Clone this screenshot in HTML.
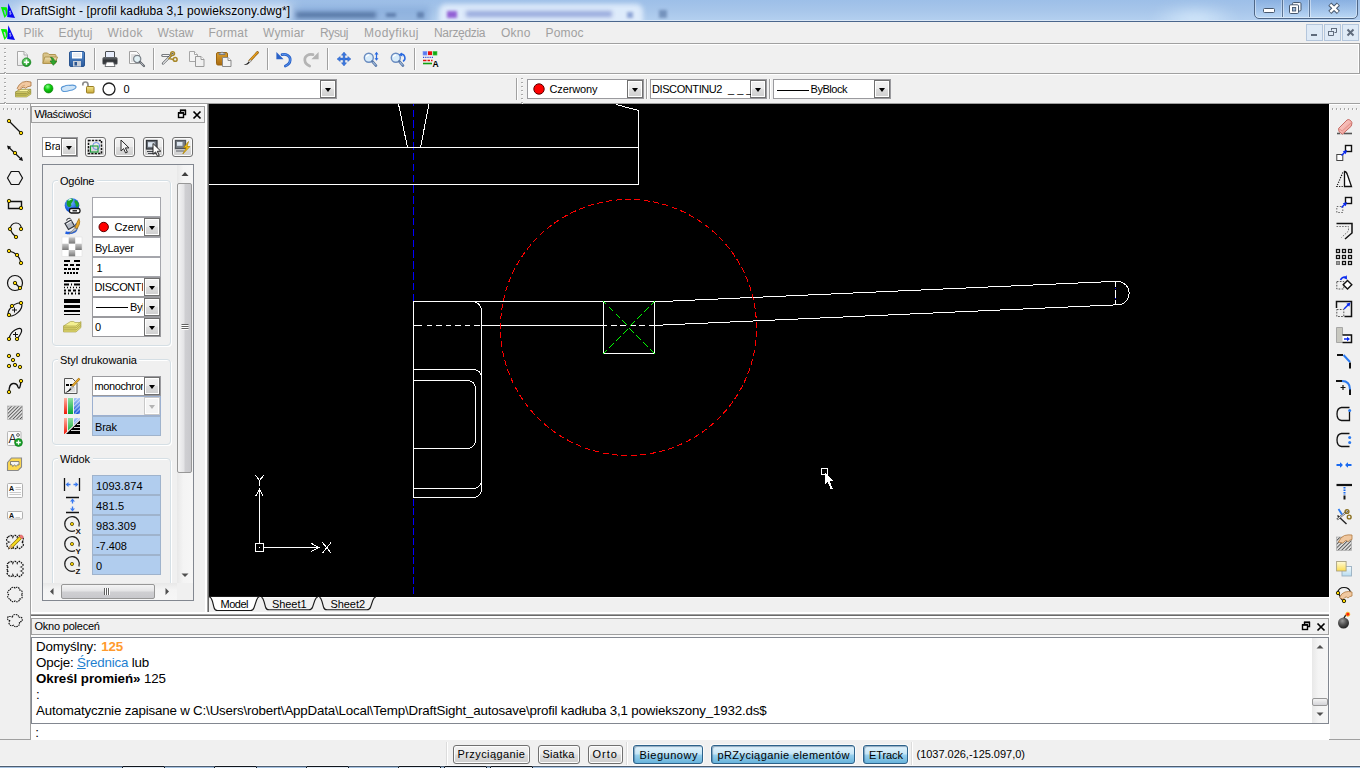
<!DOCTYPE html>
<html lang="pl"><head><meta charset="utf-8"><title>DraftSight</title>
<style>
html,body{margin:0;padding:0}
body{position:relative;width:1360px;height:768px;overflow:hidden;background:#f0f0f0;font-family:"Liberation Sans",sans-serif;font-size:11px;color:#000}
.a,.t,svg.i{position:absolute}
.t{white-space:pre;line-height:1}
.hl{position:absolute;height:1px;left:0;width:1360px}
.vl{position:absolute;width:1px}
svg{display:block;overflow:visible}
/* title */
#title{left:0;top:0;width:1360px;height:21px;overflow:hidden;background:linear-gradient(to bottom,#9dbfe8 0,#a6c5ea 45%,#b4d0f0 100%)}
#title .glow{position:absolute;filter:blur(6px)}
#capbtn{left:1254px;top:-2px;width:102px;height:19px;border:1px solid #4f6787;border-radius:0 0 5px 5px;background:linear-gradient(to bottom,rgba(110,155,215,.45) 0,rgba(150,190,235,.3) 55%,rgba(200,228,252,.45) 100%);box-shadow:inset 0 0 0 1px rgba(255,255,255,.4)}
/* combos */
.cb{position:absolute;box-sizing:border-box;border:1px solid #9a9a9e;background:#fff;height:20px;overflow:hidden}
.cb .bt{position:absolute;right:0;top:0;bottom:0;width:16px;border:1px solid #707070;box-sizing:border-box;background:linear-gradient(to bottom,#f2f2f2 0,#ebebeb 48%,#dddddd 52%,#cfcfcf 100%);box-shadow:inset 0 0 0 1px #fff}
.cb .bt:after{content:"";position:absolute;left:4px;top:7px;border:3.5px solid transparent;border-top:4px solid #000;border-bottom:0}
.fd{position:absolute;box-sizing:border-box;border:1px solid #a5a6ac;background:#fff;overflow:hidden}
.fb{background:#b1cdee;border-color:#9fb3cc}
.gb{position:absolute;box-sizing:border-box;border:1px solid #d5dfe5;border-radius:4px;box-shadow:inset 1px 1px 0 #fff,1px 1px 0 #fff}
.gl{position:absolute;background:#f0f0f0;height:12px}
.pb{position:absolute;box-sizing:border-box;width:21px;height:20px;border:1px solid #707070;border-radius:3px;background:linear-gradient(to bottom,#f2f2f2 0,#ebebeb 48%,#dddddd 52%,#cfcfcf 100%);box-shadow:inset 0 0 0 1px #fcfcfc}
.sb{position:absolute;box-sizing:border-box;height:19px;border:1px solid #707070;border-radius:3px;background:linear-gradient(to bottom,#f2f2f2 0,#ebebeb 48%,#dddddd 52%,#cfcfcf 100%);box-shadow:inset 0 0 0 1px #fcfcfc}
.sb.on{border-color:#2c628b;background:linear-gradient(to bottom,#e5f4fc 0,#c4e5f6 48%,#98d1ef 52%,#68b3db 100%);box-shadow:inset 1px 1px 1px rgba(40,80,120,.45),0 0 0 1px rgba(255,255,255,.7)}
.sep{position:absolute;width:1px;background:#a0a0a0;box-shadow:1px 0 0 #fff}
.grip{position:absolute;width:2px;background:repeating-linear-gradient(to bottom,#a8a8a8 0,#a8a8a8 1px,transparent 1px,transparent 4px)}
.grip:after{content:'';position:absolute;left:1px;top:1px;width:1px;height:100%;background:repeating-linear-gradient(to bottom,#fff 0,#fff 1px,transparent 1px,transparent 4px)}
.gripb{position:absolute;height:2px;background:repeating-linear-gradient(to right,#a8a8a8 0,#a8a8a8 1px,transparent 1px,transparent 4px)}
.gripb:after{content:'';position:absolute;left:1px;top:1px;height:1px;width:100%;background:repeating-linear-gradient(to right,#fff 0,#fff 1px,transparent 1px,transparent 4px)}
.mdi{position:absolute;box-sizing:border-box;width:17px;height:17px;top:24px;border:1px solid #b4c6dc;background:#dfeaf6}

.cb .bt.dis{background:#f4f4f4;border-color:#c8c8c8}
.cb .bt.dis:after{border-top-color:#b4b4b4}

</style></head>
<body>
<div id="title" class="a"><div class="glow" style="left:-5px;top:-6px;width:120px;height:40px;background:radial-gradient(ellipse at 40% 55%,rgba(255,255,255,.5),rgba(255,255,255,0) 70%)"></div><div class="glow" style="left:20px;top:3px;width:275px;height:16px;background:rgba(255,255,255,.45);filter:blur(6px);border-radius:8px"></div><div class="glow" style="left:290px;top:6px;width:140px;height:20px;background:rgba(80,125,190,.28);filter:blur(3px);border-radius:0px"></div><div class="glow" style="left:296px;top:12px;width:80px;height:6px;background:rgba(30,60,110,.5);filter:blur(2px);border-radius:0px"></div><div class="glow" style="left:386px;top:13px;width:10px;height:4px;background:rgba(30,60,110,.45);filter:blur(1.5px);border-radius:0px"></div><div class="glow" style="left:417px;top:12px;width:7px;height:6px;background:rgba(30,60,110,.4);filter:blur(1.5px);border-radius:0px"></div><div class="glow" style="left:439px;top:4px;width:204px;height:24px;background:rgba(226,238,252,.92);filter:blur(2.5px);border-radius:7px"></div><div class="glow" style="left:447px;top:11px;width:10px;height:7px;background:rgba(120,50,200,.75);filter:blur(1.8px);border-radius:0px"></div><div class="glow" style="left:466px;top:11px;width:146px;height:6px;background:rgba(105,125,200,.6);filter:blur(2px);border-radius:0px"></div><div class="glow" style="left:627px;top:12px;width:6px;height:6px;background:rgba(90,120,190,.6);filter:blur(1.5px);border-radius:0px"></div><div class="glow" style="left:659px;top:10px;width:8px;height:8px;background:rgba(50,80,130,.45);filter:blur(1.8px);border-radius:0px"></div><div class="glow" style="left:1150px;top:4px;width:90px;height:30px;background:radial-gradient(ellipse,rgba(225,242,255,.8),rgba(255,255,255,0) 70%)"></div></div><div class="hl" style="top:20px;background:#dae7f6"></div><div class="hl" style="top:21px;background:#4a668c"></div><svg class="i" style="left:0;top:0" width="16" height="20"><path d="M0.900 7.100L6.700 7.300Q8.200 10.600 7.400 14.600L4.500 18.100Z" fill="#00f000"/><path d="M3.500 9.700L5 10Q6.400 12.400 5.900 14.500L5.100 15.600Z" fill="#88b4dc"/><path d="M8.300 3.200L15 17.900 7.200 17Z" fill="#0808f0"/><path d="M10.800 11.400c-.9-.4-1.500 0-1.200.7c.3.600 1.300.6 1.500 1.300c.1.700-.8.900-1.600.5" fill="none" stroke="#e8e8ff" stroke-width=".9"/></svg><svg class="i" style="left:0;top:22px" width="16" height="20"><path d="M0.900 7.100L6.700 7.300Q8.200 10.600 7.400 14.600L4.500 18.100Z" fill="#00f000"/><path d="M3.500 9.700L5 10Q6.400 12.400 5.900 14.500L5.100 15.600Z" fill="#c8d0d8"/><path d="M8.300 3.200L15 17.900 7.200 17Z" fill="#0808f0"/><path d="M10.800 11.400c-.9-.4-1.500 0-1.200.7c.3.600 1.300.6 1.500 1.300c.1.700-.8.900-1.600.5" fill="none" stroke="#e8e8ff" stroke-width=".9"/></svg><span class="t" style="left:21.0px;top:4.84px;font-size:12px;letter-spacing:0.12px;text-shadow:0 0 5px rgba(255,255,255,.9)">DraftSight - [profil kadłuba 3,1 powiekszony.dwg*]</span><div id="capbtn" class="a"></div><div class="vl" style="left:1282px;top:0;height:17px;background:#5c7595;box-shadow:1px 0 0 rgba(255,255,255,.45),-1px 0 0 rgba(255,255,255,.3)"></div><div class="vl" style="left:1309px;top:0;height:17px;background:#5c7595;box-shadow:1px 0 0 rgba(255,255,255,.45),-1px 0 0 rgba(255,255,255,.3)"></div><svg class="i" style="left:1254px;top:0" width="104" height="18"><rect x="9.500" y="8.500" width="11" height="4" rx="1" fill="#fff" stroke="#47586e" stroke-width="1"/><rect x="38.500" y="2.500" width="8.500" height="8.500" rx="1.200" fill="#f4f6fa" stroke="#47586e"/><rect x="35.500" y="4.800" width="9" height="8.700" rx="1.200" fill="#fff" stroke="#47586e"/><rect x="38.500" y="7.500" width="3.200" height="3.500" fill="#9ab6d8" stroke="#47586e" stroke-width=".9"/><path d="M75.800 4.200l8.600 8.200M84.400 4.200l-8.600 8.200" stroke="#47586e" stroke-width="4.400"/><path d="M76.300 4.700l7.600 7.200M83.900 4.700l-7.600 7.200" stroke="#fff" stroke-width="2.400"/></svg><span class="t" style="left:23.5px;top:26.84px;font-size:12px;color:#a0a0a0;letter-spacing:0.22px;">Plik</span><span class="t" style="left:58.5px;top:26.84px;font-size:12px;color:#a0a0a0;letter-spacing:0.13px;">Edytuj</span><span class="t" style="left:107.5px;top:26.84px;font-size:12px;color:#a0a0a0;letter-spacing:0.41px;">Widok</span><span class="t" style="left:157.5px;top:26.84px;font-size:12px;color:#a0a0a0;">Wstaw</span><span class="t" style="left:208.5px;top:26.84px;font-size:12px;color:#a0a0a0;letter-spacing:0.20px;">Format</span><span class="t" style="left:263.0px;top:26.84px;font-size:12px;color:#a0a0a0;letter-spacing:0.19px;">Wymiar</span><span class="t" style="left:320.0px;top:26.84px;font-size:12px;color:#a0a0a0;letter-spacing:-0.38px;">Rysuj</span><span class="t" style="left:364.0px;top:26.84px;font-size:12px;color:#a0a0a0;letter-spacing:0.48px;">Modyfikuj</span><span class="t" style="left:434.0px;top:26.84px;font-size:12px;color:#a0a0a0;letter-spacing:-0.32px;">Narzędzia</span><span class="t" style="left:501.0px;top:26.84px;font-size:12px;color:#a0a0a0;letter-spacing:0.27px;">Okno</span><span class="t" style="left:545.5px;top:26.84px;font-size:12px;color:#a0a0a0;letter-spacing:0.16px;">Pomoc</span><div class="mdi" style="left:1306px"></div><div class="mdi" style="left:1324px"></div><div class="mdi" style="left:1342px"></div><svg class="i" style="left:1306px;top:24px" width="54" height="17"><rect x="5" y="10" width="6" height="2" fill="#5f6b7c"/><path d="M25.500 6.500v-2h5v4h-2M22.500 7.500h5v4h-5z" fill="none" stroke="#5f6b7c"/><path d="M22 7.500h6M25 4.500h6" stroke="#5f6b7c"/><path d="M41.500 5.500l6 6M47.500 5.500l-6 6" stroke="#5f6b7c" stroke-width="2"/></svg><div class="hl" style="top:43px;background:#a0a0a0"></div><div class="hl" style="top:44px;background:#fff"></div><div class="vl" style="left:1359px;top:43px;height:31px;background:#a0a0a0"></div><div class="vl" style="left:1358px;top:44px;height:29px;background:#fff"></div><div class="hl" style="top:73px;background:#a0a0a0"></div><div class="hl" style="top:74px;background:#fff"></div><div class="hl" style="top:103px;background:#a0a0a0"></div><div class="grip" style="left:4px;top:48px;height:25px"></div><div class="sep" style="left:94px;top:48px;height:22px"></div><div class="sep" style="left:153px;top:48px;height:22px"></div><div class="sep" style="left:267px;top:48px;height:22px"></div><div class="sep" style="left:327px;top:48px;height:22px"></div><div class="sep" style="left:414px;top:48px;height:22px"></div><svg class="i" style="left:0;top:0" width="460" height="104"><g transform="translate(16,51)"><defs><linearGradient id="pg" x1="0" y1="0" x2="1" y2="1"><stop offset="0" stop-color="#fff"/><stop offset="1" stop-color="#dcdcdc"/></linearGradient><radialGradient id="gb" cx=".4" cy=".35" r=".7"><stop offset="0" stop-color="#7be07b"/><stop offset="1" stop-color="#0f8a1a"/></radialGradient></defs><path d="M1.500 .5h6.500l3.500 3.500v10.500h-10z" fill="url(#pg)" stroke="#a8a8a8"/><path d="M8 .5v3.500h3.500" fill="#f4f4f4" stroke="#a8a8a8"/><circle cx="10.500" cy="11.200" r="4.300" fill="url(#gb)" stroke="#1c8a26" stroke-width=".8"/><path d="M10.500 8.600v5.200M7.900 11.200h5.200" stroke="#fff" stroke-width="1.500"/></g><g transform="translate(42,51)"><defs><linearGradient id="fo" x1="0" y1="0" x2="0" y2="1"><stop offset="0" stop-color="#efe2b8"/><stop offset="1" stop-color="#c9a95a"/></linearGradient></defs><path d="M1 3.500q0-1.500 1.500-1.500h3l1.500 1.500h6q1 0 1 1v7.500h-13z" fill="#d9c48a" stroke="#b09550"/><path d="M.8 12.500l2-6.500h12.700l-2.500 6.500z" fill="url(#fo)" stroke="#b09550"/><path d="M8.500 6.200c2.600.2 3.800 1.800 3.900 3.800h2.400l-3.400 4.300-3.400-4.300h2.200c-.1-1.500-.7-2.600-1.700-3.800z" fill="#2ea62e" stroke="#1d7a1d" stroke-width=".7"/></g><g transform="translate(69,51)"><defs><linearGradient id="sv" x1="0" y1="0" x2="0" y2="1"><stop offset="0" stop-color="#5a8fd0"/><stop offset="1" stop-color="#2a5a9c"/></linearGradient></defs><rect x=".5" y=".5" width="15" height="15" rx="1.500" fill="url(#sv)" stroke="#2a5590"/><rect x="3" y="1" width="10" height="6.500" fill="#fff"/><path d="M4 3h8M4 5h8" stroke="#d4dce8"/><rect x="4" y="10" width="8" height="5.500" fill="#c9cfd8"/><rect x="5.500" y="11" width="2.500" height="3.500" fill="#2a5590"/></g><g transform="translate(102,51)"><defs><linearGradient id="pr" x1="0" y1="0" x2="0" y2="1"><stop offset="0" stop-color="#6a6e72"/><stop offset=".5" stop-color="#2e3134"/><stop offset="1" stop-color="#45484c"/></linearGradient></defs><path d="M3.500 6v-5q0-.5.500-.5h8q.5 0 .5.500v5" fill="#e8eefc" stroke="#4a4d50"/><path d="M.5 12.500v-5q0-1.500 1.500-1.500h12q1.500 0 1.500 1.500v5q0 1-1 1h-13q-1 0-1-1z" fill="url(#pr)"/><path d="M3 15.500l1.500-4.500h7l1.500 4.500z" fill="#fff" stroke="#55585c" stroke-width=".8"/></g><g transform="translate(129,51)"><path d="M.5 .5h7l3 3v9h-10z" fill="#fafafa" stroke="#a0a0a0"/><path d="M2 4h5M2 6h4M2 8h3M2 10h3" stroke="#c8c8c8"/><circle cx="8.200" cy="8" r="3.600" fill="#dff0f4" fill-opacity=".9" stroke="#7a8088" stroke-width="1.200"/><path d="M10.800 10.800l4.200 4.200" stroke="#60656c" stroke-width="2.200" stroke-linecap="round"/><path d="M11.500 11.500l3 3" stroke="#c8ccd0" stroke-width=".8"/></g><g transform="translate(162,51)"><path d="M.5 4.500h6.500M1 12.500l9.500-9.500" stroke="#50545a" stroke-width="2.400" stroke-linecap="round"/><path d="M.8 4.500h6M1.200 12.300l9-9" stroke="#f4f4f4" stroke-width="1.100" stroke-linecap="round"/><circle cx="10.600" cy="2.700" r="1.900" fill="none" stroke="#a8882a" stroke-width="1.500"/><circle cx="13.200" cy="8.400" r="1.900" fill="none" stroke="#a8882a" stroke-width="1.500"/><path d="M9.500 4.500l-2.500 3 4.200 1" fill="none" stroke="#a8882a" stroke-width="1.300"/></g><g transform="translate(189,51)"><path d="M.5 .5h5l3 3v7h-8z" fill="#f4f4f4" stroke="#a6a6a6"/><path d="M5.500 .5v3h3" fill="#fff" stroke="#a6a6a6"/><path d="M6.500 5.500h5.500l3 3v7h-8.500z" fill="#f0f0f0" stroke="#9a9a9a"/><path d="M12 5.500v3h3" fill="#fff" stroke="#9a9a9a"/></g><g transform="translate(216,51)"><defs><linearGradient id="pa" x1="0" y1="0" x2="0" y2="1"><stop offset="0" stop-color="#dca030"/><stop offset="1" stop-color="#a86a10"/></linearGradient></defs><rect x=".5" y="1.500" width="11" height="12.500" rx="1.500" fill="url(#pa)" stroke="#9a6410"/><path d="M3 3.500v-1.500h1.500q1.500-2 3 0h1.500v1.500z" fill="#c8ccd2" stroke="#6a6e74" stroke-width=".8"/><path d="M6.500 6.500h5.500l3 3v6h-8.500z" fill="#f2f2f2" stroke="#8a8a8a"/><path d="M12 6.500v3h3" fill="#fff" stroke="#8a8a8a"/></g><g transform="translate(243,51)"><path d="M14.500 1.500l-7.800 8.300" stroke="#8a5a10" stroke-width="2.600" stroke-linecap="round"/><path d="M14.300 1.500l-7.500 8" stroke="#e8a020" stroke-width="1.400" stroke-linecap="round"/><path d="M7.500 8.700l-2 2.100 1 1 2-2.100z" fill="#d8dce0" stroke="#7a7e84" stroke-width=".6"/><path d="M5.700 10.700q-1.200 2-5 3.300q3.500.6 6-2.300z" fill="#1a1a1a"/></g><g transform="translate(276,51)"><path d="M6 3.600C10 2.400 14.600 5 14.200 9.200C14 12 12 14 9.300 15" fill="none" stroke="#2a62c8" stroke-width="2.700" stroke-linecap="round"/><path d="M6 3.600C10 2.400 14.600 5 14.200 9.200C14 12 12 14 9.300 15" fill="none" stroke="#5a96f0" stroke-width="1"/><path d="M.4 1v7.200h7.200z" fill="#2a62c8"/></g><g transform="translate(303,51)"><g transform="translate(16,0) scale(-1,1)"><path d="M6 3.600C10 2.400 14.600 5 14.200 9.200C14 12 12 14 9.300 15" fill="none" stroke="#b4b4b4" stroke-width="2.700" stroke-linecap="round"/><path d="M.4 1v7.200h7.200z" fill="#b4b4b4"/></g></g><g transform="translate(336,51)"><path d="M8 1l2.600 3.200h-1.700v2.900h2.900v-1.700l3.200 2.600-3.200 2.600v-1.700h-2.900v2.900h1.700l-2.600 3.200-2.600-3.200h1.700v-2.900h-2.900v1.700l-3.200-2.600 3.200-2.600v1.700h2.900v-2.900h-1.700z" fill="#3a78e0" stroke="#2456b8" stroke-width=".4"/></g><g transform="translate(363,51)"><circle cx="5.800" cy="6.800" r="4.500" fill="#d8ecfa" stroke="#6a8cc0" stroke-width="1.400"/><path d="M3.200 6q.8-2 3-2.200" fill="none" stroke="#fff" stroke-width="1.200"/><path d="M9.300 10.400l3.700 4.200" stroke="#5878a8" stroke-width="2.600" stroke-linecap="round"/><path d="M9.800 11l3 3.400" stroke="#b8d0ec" stroke-width="1"/><path d="M13.500 .8l2 2.600h-4zM13.500 9.800l2-2.600h-4z" fill="#2a6ae0"/><path d="M13.500 3v5" stroke="#2a6ae0" stroke-width="1.200"/></g><g transform="translate(390,51)"><circle cx="5.800" cy="6.800" r="4.500" fill="#d8ecfa" stroke="#6a8cc0" stroke-width="1.400"/><path d="M3.200 6q.8-2 3-2.200" fill="none" stroke="#fff" stroke-width="1.200"/><path d="M9.300 10.400l3.700 4.200" stroke="#5878a8" stroke-width="2.600" stroke-linecap="round"/><path d="M9.800 11l3 3.400" stroke="#b8d0ec" stroke-width="1"/><path d="M10.500 3A4 4 0 0 1 13 10.400" fill="none" stroke="#2a6ae0" stroke-width="1.500"/><path d="M8.600 4l3.400-2.600.4 4z" fill="#2a6ae0"/></g><g transform="translate(423,51)"><rect x="0" y=".3" width="4" height="3.800" fill="#5a7af0" stroke="#8aa0f8" stroke-width=".6"/><rect x="5" y=".3" width="4" height="3.800" fill="#e81010"/><rect x="10" y=".3" width="4" height="3.800" fill="#10a810" stroke="#50c850" stroke-width=".6"/><path d="M0 6.400h10" stroke="#2a4ae0" stroke-width="1.400" stroke-dasharray="1.200 1"/><path d="M0 9.500h9.500" stroke="#e01010" stroke-width="1.600" stroke-dasharray="3.500 1 2.500 1 2"/><path d="M0 12.500h9" stroke="#10a010" stroke-width="1.600"/></g><text x="432.500" y="67.300" font-family="Liberation Sans,sans-serif" font-size="8.500" font-weight="700" fill="#000">A</text><g transform="translate(15,81)"><path d="M.5 11L5 8.300H15.800L11.500 11Z" fill="#f8f4a0" stroke="#8a8430" stroke-width=".7"/><path d="M.5 11.0H11.500L15.800 8.3V9.95L11.500 12.65H.5Z" fill="#e8e078" stroke="#8a8430" stroke-width=".6"/><path d="M.5 12.65H11.500L15.800 9.95V11.6L11.500 14.3H.5Z" fill="#d2ca5c" stroke="#8a8430" stroke-width=".6"/><path d="M.5 14.3H11.500L15.800 11.600000000000001V13.25L11.500 15.950000000000001H.5Z" fill="#e0d86c" stroke="#8a8430" stroke-width=".6"/><path d="M2.200 7.300Q3.500 3.500 7.500 1.200Q11.500-.3 16 1V5Q12.500 5.200 10.500 7.200Q9 5.600 7 6.600L4.800 9Q3 9 2.200 7.300Z" fill="#f2c9a0" stroke="#a8703a" stroke-width=".8"/><path d="M5.500 6.500q2-2 4.500-2.300" fill="none" stroke="#c89868" stroke-width=".7"/></g></svg><div class="grip" style="left:4px;top:78px;height:25px"></div><div class="cb" style="left:37px;top:79px;width:300px"><div class="bt"></div></div><svg class="i" style="left:37px;top:79px" width="100" height="20"><defs><radialGradient id="gd" cx=".4" cy=".3" r=".75"><stop offset="0" stop-color="#8cff8c"/><stop offset=".45" stop-color="#10d010"/><stop offset="1" stop-color="#048a04"/></radialGradient><linearGradient id="lk" x1="0" y1="0" x2="0" y2="1"><stop offset="0" stop-color="#f4e890"/><stop offset="1" stop-color="#c8a838"/></linearGradient></defs><circle cx="11.500" cy="9.500" r="4.500" fill="url(#gd)" stroke="#0a8a0a" stroke-width=".6"/><path d="M24.600 10.800q-1.200-2.600 2.200-3.400q3-1.600 6.200-1q3.200-.6 5.200 .3q2 1.300-.6 3.200q-2 1.500-5 1.600q-3.600 1.500-6.200 .9q-1.400-.4-1.800-1.600z" fill="#cfe5f8" stroke="#5a98d6" stroke-width="1.100"/><path d="M45.800 6.500v-1q0-2.500 2.600-2.500t2.600 2.500v2.500" fill="none" stroke="#8c8c8c" stroke-width="1.700"/><rect x="49.500" y="7.500" width="7.500" height="6.500" rx=".8" fill="url(#lk)" stroke="#9a7e24"/><circle cx="72" cy="10" r="6" fill="#fff" stroke="#202020" stroke-width="1.300"/></svg><span class="t" style="left:123.5px;top:83.69px;font-size:11px;">0</span><div class="sep" style="left:516px;top:78px;height:22px"></div><div class="grip" style="left:521px;top:78px;height:25px"></div><div class="cb" style="left:527px;top:79px;width:117px"><div class="bt"></div></div><svg class="i" style="left:527px;top:79px" width="30" height="20"><circle cx="12" cy="10" r="5.200" fill="#ff0000" stroke="#5a0000" stroke-width="1"/></svg><span class="t" style="left:549.5px;top:83.69px;font-size:11px;letter-spacing:-0.13px;">Czerwony</span><div class="sep" style="left:646px;top:79px;height:20px"></div><div class="cb" style="left:650px;top:79px;width:117px"><div class="bt"></div></div><span class="t" style="left:652.0px;top:83.69px;font-size:11px;letter-spacing:-0.41px;">DISCONTINU2</span><div class="a" style="left:651px;top:80px;width:99.5px;height:18px;overflow:hidden"><span class="t" style="left:77.0px;top:3.69px;font-size:11px;">_ _ _ _ _</span></div><div class="sep" style="left:769px;top:79px;height:20px"></div><div class="cb" style="left:773px;top:79px;width:118px"><div class="bt"></div></div><div class="a" style="left:777px;top:90px;width:32px;height:1px;background:#000"></div><span class="t" style="left:810.5px;top:83.69px;font-size:11px;letter-spacing:-0.46px;">ByBlock</span><div class="hl" style="top:104px;width:30px;background:#fff"></div><div class="vl" style="left:30px;top:104px;height:636px;background:#a0a0a0"></div><div class="hl" style="top:739px;width:31px;background:#a0a0a0"></div><div class="gripb" style="left:3px;top:108px;width:25px"></div><svg class="i" style="left:0;top:0" width="31" height="740" fill="none" stroke="#111" stroke-width="1.200"><path d="M9 121l12 12"/><circle cx="9" cy="121" r="1.700" fill="#ffd800" stroke="#1a1a00" stroke-width=".9"/><circle cx="21" cy="133" r="1.700" fill="#ffd800" stroke="#1a1a00" stroke-width=".9"/><path d="M8.500 147l13 12.500"/><path d="M7 145.500l4.200 1.200-3 3zM23 161l-4.200-1.200 3-3z" fill="#111" stroke="none"/><circle cx="15" cy="153" r="1.700" fill="#ffd800" stroke="#1a1a00" stroke-width=".9"/><path d="M7.500 178l3.700-6.500h7.600l3.700 6.500-3.700 6.500h-7.600z"/><path d="M8.500 201.500h13v7h-13z" stroke-width="1.400"/><circle cx="9" cy="201" r="1.700" fill="#ffd800" stroke="#1a1a00" stroke-width=".9"/><circle cx="21" cy="208" r="1.700" fill="#ffd800" stroke="#1a1a00" stroke-width=".9"/><path d="M10 229q1-6 6-6t5.500 6M10 229q2 5 6 8"/><circle cx="10" cy="229" r="1.700" fill="#ffd800" stroke="#1a1a00" stroke-width=".9"/><circle cx="21" cy="229" r="1.700" fill="#ffd800" stroke="#1a1a00" stroke-width=".9"/><circle cx="16" cy="237" r="1.700" fill="#ffd800" stroke="#1a1a00" stroke-width=".9"/><path d="M9 251q5 1 8 4t4 8"/><circle cx="9" cy="251" r="1.700" fill="#ffd800" stroke="#1a1a00" stroke-width=".9"/><circle cx="17" cy="255" r="1.700" fill="#ffd800" stroke="#1a1a00" stroke-width=".9"/><circle cx="21" cy="263" r="1.700" fill="#ffd800" stroke="#1a1a00" stroke-width=".9"/><circle cx="15" cy="283" r="7.500"/><path d="M15 283l5 5"/><circle cx="15" cy="283" r="1.700" fill="#ffd800" stroke="#1a1a00" stroke-width=".9"/><circle cx="20" cy="288" r="1.700" fill="#ffd800" stroke="#1a1a00" stroke-width=".9"/><ellipse cx="15" cy="309.500" rx="8.500" ry="4.200" transform="rotate(-42 15 309.500)"/><path d="M12 310h5M14.500 307.500v5" stroke-width="1"/><circle cx="21" cy="303" r="1.700" fill="#ffd800" stroke="#1a1a00" stroke-width=".9"/><circle cx="12" cy="306" r="1.700" fill="#ffd800" stroke="#1a1a00" stroke-width=".9"/><circle cx="9" cy="315" r="1.700" fill="#ffd800" stroke="#1a1a00" stroke-width=".9"/><path d="M9 339q1-6 6-9t6.500-.5q1 3-4.500 9.500"/><path d="M13 334.500h5M15.500 332v5" stroke-width="1"/><circle cx="9" cy="339" r="1.700" fill="#ffd800" stroke="#1a1a00" stroke-width=".9"/><circle cx="17" cy="339" r="1.700" fill="#ffd800" stroke="#1a1a00" stroke-width=".9"/><circle cx="9" cy="356" r="1.700" fill="#ffd800" stroke="#1a1a00" stroke-width=".9"/><circle cx="18" cy="355" r="1.700" fill="#ffd800" stroke="#1a1a00" stroke-width=".9"/><circle cx="13" cy="360" r="1.700" fill="#ffd800" stroke="#1a1a00" stroke-width=".9"/><circle cx="9" cy="366" r="1.700" fill="#ffd800" stroke="#1a1a00" stroke-width=".9"/><circle cx="15" cy="365" r="1.700" fill="#ffd800" stroke="#1a1a00" stroke-width=".9"/><circle cx="20" cy="367" r="1.700" fill="#ffd800" stroke="#1a1a00" stroke-width=".9"/><path d="M9 392q0-8 4-8.500t5 3.500q2 4 3-6" stroke-width="1.400"/><circle cx="21" cy="381" r="1.700" fill="#ffd800" stroke="#1a1a00" stroke-width=".9"/><circle cx="9" cy="392" r="1.700" fill="#ffd800" stroke="#1a1a00" stroke-width=".9"/><defs><pattern id="hp" x="0" y="0" width="2.500" height="2.500" patternUnits="userSpaceOnUse" patternTransform="rotate(-45)"><rect x="0" y="0" width="2.500" height="1" fill="#5a5a5a" stroke="none"/></pattern></defs><rect x="7.500" y="406" width="15" height="13.500" fill="#e8e8e8" stroke="none"/><rect x="7.500" y="406" width="15" height="13.500" fill="url(#hp)" stroke="#b8b8b8" stroke-width=".8"/><rect x="7.500" y="431.500" width="13.500" height="14" rx="1" fill="#fafafa" stroke="#b0b0b0" stroke-width=".9"/><text x="8.500" y="443" font-family="Liberation Sans,sans-serif" font-size="12" fill="#222" stroke="none">A</text><circle cx="18" cy="435" r="1.400" stroke="#444" stroke-width=".8"/><circle cx="18.500" cy="442.500" r="3.900" fill="#18a028" stroke="#0c7a18" stroke-width=".7"/><path d="M18.500 440.200v4.600M16.200 442.500h4.600" stroke="#fff" stroke-width="1.300"/><path d="M7.500 462.500l4-4.500h10v9l-3.500 3.500h-10.500z" fill="#fcd850" stroke="#8a8a8a" stroke-width="1.100"/><path d="M10.500 461.500h8.500v3.500l-1.600-.2-1.200 1.600-1.800-1.600-1.600 1.800-1-2-1.300.4z" fill="#f4f4f4" stroke="#6a6a6a" stroke-width=".8"/><rect x="7.500" y="483.500" width="15" height="14" rx="1" fill="#fcfcfc" stroke="#a8a8a8" stroke-width=".9"/><text x="9" y="491" font-family="Liberation Sans,sans-serif" font-size="7" font-weight="700" fill="#111" stroke="none">A</text><path d="M15.500 487.500h5.500M15.500 489.500h5.500M9.500 492.500h11.500M9.500 494.500h11.500" stroke="#c4c4c4" stroke-width=".9"/><rect x="7.500" y="511.500" width="15" height="7.500" rx="1" fill="#fcfcfc" stroke="#a8a8a8" stroke-width=".9"/><text x="9" y="518" font-family="Liberation Sans,sans-serif" font-size="7" font-weight="700" fill="#111" stroke="none">A</text><path d="M15.500 517.500h4.500" stroke="#c4c4c4" stroke-width=".9"/><path d="M8.5 537.0A2.3 2.3 0 0 1 12.8 537.0A2.3 2.3 0 0 1 17.2 537.0A2.3 2.3 0 0 1 21.5 537.0A2.6 2.6 0 0 1 21.5 542.0A2.6 2.6 0 0 1 21.5 547.0A2.3 2.3 0 0 1 17.2 547.0A2.3 2.3 0 0 1 12.8 547.0A2.3 2.3 0 0 1 8.5 547.0A2.6 2.6 0 0 1 8.5 542.0A2.6 2.6 0 0 1 8.5 537.0" stroke-dasharray="1.600 .9" stroke-width="1.300"/><path d="M20.500 537.500l-10 10" stroke="#8a7000" stroke-width="3.400"/><path d="M20.300 537.700l-9.600 9.600" stroke="#f8dc20" stroke-width="2"/><path d="M19 536l3 3 1-1.200q.6-1-.4-2t-2.200-.6z" fill="#f07878" stroke="#c04848" stroke-width=".5"/><path d="M10.500 544.500l-2.500 5 5-2.500z" fill="#d8a868" stroke="none"/><path d="M8 549.500l1.800-.8-1-1z" fill="#111" stroke="none"/><path d="M8.5 563.0A2.3 2.3 0 0 1 12.8 563.0A2.3 2.3 0 0 1 17.2 563.0A2.3 2.3 0 0 1 21.5 563.0A2.1 2.1 0 0 1 21.5 567.0A2.1 2.1 0 0 1 21.5 571.0A2.1 2.1 0 0 1 21.5 575.0A2.3 2.3 0 0 1 17.2 575.0A2.3 2.3 0 0 1 12.8 575.0A2.3 2.3 0 0 1 8.5 575.0A2.1 2.1 0 0 1 8.5 571.0A2.1 2.1 0 0 1 8.5 567.0A2.1 2.1 0 0 1 8.5 563.0" stroke-dasharray="1.600 .9" stroke-width="1.300"/><path d="M21.5 594.5A2.7 2.7 0 0 1 19.6 599.1A2.7 2.7 0 0 1 15.0 601.0A2.7 2.7 0 0 1 10.4 599.1A2.7 2.7 0 0 1 8.5 594.5A2.7 2.7 0 0 1 10.4 589.9A2.7 2.7 0 0 1 15.0 588.0A2.7 2.7 0 0 1 19.6 589.9A2.7 2.7 0 0 1 21.5 594.5" stroke-dasharray="1.500 .8" stroke-width="1.100"/><path d="M12.500 617q.5-3 3.500-2.500t2.500 2.800q3.500-.6 3.800 1.800t-3 3q.8 3-1.800 4.200t-4-1q-3 1.200-4.200-1.200t1.200-3.300q-3.600-.800-3-3t4.600-.8z" stroke-dasharray="1.500 .8" stroke-width="1.100"/></svg><div class="vl" style="left:31px;top:104px;height:509px;background:#fff"></div><div class="hl" style="top:104px;left:31px;width:176px;height:2px;background:#fff"></div><div class="a" style="left:31px;top:106px;width:174px;height:17px;box-sizing:border-box;border:1px solid #a0a0a0"></div><span class="t" style="left:34.5px;top:108.69px;font-size:11px;letter-spacing:-0.29px;">Właściwości</span><svg class="i" style="left:176px;top:108px" width="28" height="12" fill="none" stroke="#000"><path d="M4.500 4.500v-2h5v4h-2.500" stroke-width="1.400"/><rect x="2.500" y="5" width="5" height="4.500" stroke-width="1.400"/><path d="M2 4.700h6M4 2.200h6" stroke-width="1.600"/><path d="M17.500 3.500l7 7M24.500 3.500l-7 7" stroke-width="1.700"/></svg><div class="cb" style="left:42px;top:137px;width:36px"><div class="bt"></div></div><div class="a" style="left:43px;top:138px;width:17.300px;height:18px;overflow:hidden"><span class="t" style="left:1.8px;top:4.28px;font-size:10.3px;">Brak</span></div><div class="pb" style="left:85px;top:137px"></div><div class="pb" style="left:114px;top:137px"></div><div class="pb" style="left:143px;top:137px"></div><div class="pb" style="left:172px;top:137px"></div><svg class="i" style="left:0;top:1px" width="208" height="160" fill="none"><rect x="88.500" y="139.500" width="13" height="13" stroke="#111" stroke-width="1.500" stroke-dasharray="2.200 1.200"/><circle cx="96.200" cy="145" r="3.500" stroke="#6a8ae8" stroke-width="1"/><rect x="90.500" y="145" width="7.500" height="6" stroke="#18a038" stroke-width="1.100"/><path d="M0 0v11l2.600-2.400 2 4.400 1.800-.8-2-4.300h3.600z" transform="translate(121,139)" fill="#f4f4f4" stroke="#2a2a2a" stroke-width="1"/><rect x="146.500" y="139.500" width="10.500" height="8.500" fill="#70767e" stroke="#33373c" stroke-width="1.300"/><rect x="148" y="141.200" width="6.500" height="4.600" fill="#dfe9f4" stroke="none"/><path d="M147 150.500h10M148 152.500h8" stroke="#44484e" stroke-width="1.200"/><path d="M0 0v11l2.600-2.400 2 4.400 1.800-.8-2-4.300h3.600z" transform="translate(153,142.500) scale(.98)" fill="#fff" stroke="#222" stroke-width="1"/><rect x="175.500" y="139.500" width="10" height="8" fill="#7a8088" stroke="#50545a" stroke-width="1.300"/><rect x="177" y="141" width="5.500" height="3.800" fill="#dde6f0" stroke="none"/><path d="M176 150h8" stroke="#70747a" stroke-width="1.200"/><path d="M188.500 140.500l-5 6.200h2.800l-3.500 6.300 7.200-7.500h-3z" fill="#f4c010" stroke="#a88000" stroke-width=".7"/></svg><div class="a" style="left:42px;top:164px;width:152px;height:437px;box-sizing:border-box;border:1px solid #828790"></div><div class="a" style="left:177px;top:165px;width:16px;height:418px;background:linear-gradient(to right,#e8e8e8,#f4f4f4 40%,#f6f6f6)"></div><div class="a" style="left:177px;top:183px;width:15px;height:290px;box-sizing:border-box;border:1px solid #979797;border-radius:2px;background:linear-gradient(to right,#f4f4f4 0,#e4e4e6 45%,#cfcfd2 55%,#c8c8cc 100%)"></div><svg class="i" style="left:177px;top:166px" width="16" height="417"><path d="M4.500 10l3.500-4 3.500 4z" fill="#404040"/><path d="M4.500 407.500l3.500 3.500 3.500-3.500z" fill="#505050"/><path d="M4.500 158.500h7M4.500 160.500h7M4.500 162.500h7" stroke="#606060"/><path d="M4.500 159.500h7M4.500 161.500h7M4.500 163.500h7" stroke="#fff"/></svg><div class="a" style="left:43px;top:583px;width:134px;height:17px;background:linear-gradient(to bottom,#e8e8e8,#f4f4f4 40%,#f6f6f6)"></div><div class="a" style="left:61px;top:584px;width:94px;height:15px;box-sizing:border-box;border:1px solid #979797;border-radius:2px;background:linear-gradient(to bottom,#f4f4f4 0,#e4e4e6 45%,#cfcfd2 55%,#c8c8cc 100%)"></div><svg class="i" style="left:43px;top:583px" width="134" height="17"><path d="M10.500 5l-3.500 3.500 3.500 3.500z" fill="#505050"/><path d="M122.500 5l3.500 3.500-3.500 3.500z" fill="#505050"/><path d="M61.500 5v7M63.500 5v7M65.500 5v7" stroke="#606060"/><path d="M62.500 5v7M64.500 5v7M66.500 5v7" stroke="#fff"/></svg><div class="gb" style="left:52px;top:180px;width:119px;height:166px"></div><div class="gl" style="left:58px;top:174px;width:39px"></div><span class="t" style="left:60.0px;top:175.69px;font-size:11px;letter-spacing:-0.20px;">Ogólne</span><div class="gb" style="left:52px;top:359px;width:119px;height:86px"></div><div class="gl" style="left:58px;top:353px;width:81px"></div><span class="t" style="left:60.0px;top:354.69px;font-size:11px;letter-spacing:-0.05px;">Styl drukowania</span><div class="a" style="left:43px;top:452px;width:134px;height:131px;overflow:hidden"><div class="gb" style="left:9px;top:6px;width:119px;height:140px"></div><div class="gl" style="left:15px;top:0;width:35px"></div></div><span class="t" style="left:60.0px;top:453.69px;font-size:11px;letter-spacing:-0.14px;">Widok</span><div class="fd " style="left:92px;top:197px;width:69px;height:20px"></div><div class="cb" style="left:92px;top:217px;width:69px;height:20px"><div class="bt"></div></div><div class="fd " style="left:92px;top:237px;width:69px;height:20px"></div><div class="fd " style="left:92px;top:257px;width:69px;height:20px"></div><div class="cb" style="left:92px;top:277px;width:69px;height:20px"><div class="bt"></div></div><div class="cb" style="left:92px;top:297px;width:69px;height:20px"><div class="bt"></div></div><div class="cb" style="left:92px;top:317px;width:69px;height:20px"><div class="bt"></div></div><svg class="i" style="left:92px;top:217px" width="30" height="20"><circle cx="11.700" cy="10" r="4.700" fill="#ff0000" stroke="#5a0000" stroke-width="1"/></svg><div class="a" style="left:93px;top:218px;width:50px;height:18px;overflow:hidden"><span class="t" style="left:21.5px;top:3.69px;font-size:11px;letter-spacing:-0.13px;">Czerwony</span></div><span class="t" style="left:95.0px;top:242.69px;font-size:11px;letter-spacing:-0.23px;">ByLayer</span><span class="t" style="left:96.5px;top:262.69px;font-size:11px;">1</span><div class="a" style="left:93px;top:278px;width:50px;height:18px;overflow:hidden"><span class="t" style="left:1.5px;top:3.69px;font-size:11px;letter-spacing:-0.41px;">DISCONTINU2</span></div><div class="a" style="left:93px;top:298px;width:50px;height:18px;overflow:hidden"><div class="a" style="left:3px;top:9px;width:32px;height:1px;background:#000"></div><span class="t" style="left:37.0px;top:3.69px;font-size:11px;letter-spacing:-0.46px;">ByBlock</span></div><span class="t" style="left:95.0px;top:321.69px;font-size:11px;">0</span><div class="cb" style="left:92px;top:376px;width:69px;height:20px"><div class="bt"></div></div><div class="cb" style="left:92px;top:396px;width:69px;height:20px;background:#f0f0f0;border-color:#9cb0d0"><div class="bt dis"></div></div><div class="fd fb" style="left:92px;top:416px;width:69px;height:20px"></div><div class="a" style="left:93px;top:377px;width:50px;height:18px;overflow:hidden"><span class="t" style="left:1.5px;top:3.69px;font-size:11px;letter-spacing:-0.38px;">monochrome.ctb</span></div><span class="t" style="left:95.0px;top:421.69px;font-size:11px;letter-spacing:-0.21px;">Brak</span><div class="fd fb" style="left:92px;top:475px;width:69px;height:20px"></div><span class="t" style="left:96.0px;top:480.69px;font-size:11px;letter-spacing:0.09px;">1093.874</span><div class="fd fb" style="left:92px;top:495px;width:69px;height:20px"></div><span class="t" style="left:96.0px;top:500.69px;font-size:11px;letter-spacing:0.12px;">481.5</span><div class="fd fb" style="left:92px;top:515px;width:69px;height:20px"></div><span class="t" style="left:96.0px;top:520.69px;font-size:11px;letter-spacing:0.04px;">983.309</span><div class="fd fb" style="left:92px;top:535px;width:69px;height:20px"></div><span class="t" style="left:96.0px;top:540.69px;font-size:11px;letter-spacing:-0.04px;">-7.408</span><div class="fd fb" style="left:92px;top:555px;width:69px;height:20px"></div><span class="t" style="left:96.0px;top:560.69px;font-size:11px;">0</span><svg class="i" style="left:0;top:0" width="100" height="582" fill="none"><defs><clipPath id="pcl"><rect x="43" y="166" width="134" height="417"/></clipPath><radialGradient id="gl" cx=".4" cy=".3" r=".8"><stop offset="0" stop-color="#7ab8ff"/><stop offset=".6" stop-color="#1a62e0"/><stop offset="1" stop-color="#0a3aa8"/></radialGradient><linearGradient id="rg" x1="0" y1="0" x2="0" y2="1"><stop offset="0" stop-color="#ffb0a0"/><stop offset="1" stop-color="#f01808"/></linearGradient><linearGradient id="gg" x1="0" y1="0" x2="0" y2="1"><stop offset="0" stop-color="#90e0a0"/><stop offset="1" stop-color="#08a838"/></linearGradient><linearGradient id="bg" x1="0" y1="0" x2="0" y2="1"><stop offset="0" stop-color="#a0c0f8"/><stop offset="1" stop-color="#1050d8"/></linearGradient><linearGradient id="ck" x1="0" y1="0" x2="0" y2="1"><stop offset="0" stop-color="#c8c8c8"/><stop offset="1" stop-color="#787878"/></linearGradient><pattern id="bh" width="3" height="3" patternUnits="userSpaceOnUse" patternTransform="rotate(-45)"><rect width="3" height="1.200" fill="#fff" fill-opacity=".55"/></pattern></defs><g clip-path="url(#pcl)"><circle cx="72" cy="205.500" r="7.300" fill="url(#gl)"/><path d="M67 201q2-3 5-2.500q2 1 .5 3q-2 2-1 4q-1.500 2.500-3.500 1q-2-2-1-5.500zM75 200q3 1 4 4q-.5 3-2 3.500q-2-1.500-1.500-3.500q-2-2-.5-4z" fill="#18a028"/><path d="M68.500 200.500q1.500-1.500 3-1" stroke="#d0ffe0" stroke-width="1.200"/><rect x="69.500" y="208.500" width="10.500" height="4.500" rx="1.800" fill="#fff" stroke="#111" stroke-width="1.300"/><path d="M72.500 210.800h4.500" stroke="#111" stroke-width="1.300"/><path d="M65.500 232.500q5 1.500 9-1q3.500-3 1.500-8" stroke="#1f5ee0" stroke-width="2.600"/><path d="M65 223.500l6-3.500 3.500 6-6 3.500z" fill="#b4b9c2" stroke="#30343c" stroke-width="1.200"/><path d="M66.500 220.500q1-3 4-2" stroke="#30343c" stroke-width="1.100"/><path d="M66.500 224l5-2.800" stroke="#fff" stroke-width=".9"/><path d="M79 218.500q1.200 3 .3 6l-2.300 4.500-2.200-1.200 2-5z" fill="#e8a828" stroke="#9a6a10" stroke-width=".7"/><path d="M74.800 227.800l2.200 1.200-1 1.500-7 3.500 4.800-5z" fill="#c0c4c8" stroke="#666" stroke-width=".6"/><rect x="62" y="237" width="20" height="19.500" fill="#fff" stroke="#e0e0e0" stroke-width=".6"/><rect x="68.7" y="237.3" width="6.500" height="6.300" fill="url(#ck)"/><rect x="62.2" y="243.7" width="6.500" height="6.300" fill="url(#ck)"/><rect x="75.3" y="243.7" width="6.500" height="6.300" fill="url(#ck)"/><rect x="68.7" y="250" width="6.500" height="6.300" fill="url(#ck)"/><path d="M64 261h6M74 261h6" stroke="#000" stroke-width="2"/><path d="M64 265h4M70 265h4M76 265h4" stroke="#000" stroke-width="2"/><path d="M64 269h3M68 269h3M72 269h3M76 269h3" stroke="#000" stroke-width="2"/><path d="M64 273h2M67 273h2M70 273h2M73 273h2M76 273h2" stroke="#000" stroke-width="2"/><path d="M64 281h16" stroke="#000" stroke-width="2"/><path d="M64 284.500h5M71 284.500h1M74 284.500h6" stroke="#000" stroke-width="1.800"/><path d="M64 287.500h16" stroke="#000" stroke-width="1.600" stroke-dasharray="1 2"/><path d="M64 290.500h2M68 290.500h3M73 290.500h3M78 290.500h2" stroke="#000" stroke-width="1.800"/><path d="M64 293.500h2M68 293.500h1M71 293.500h2M75 293.500h1M78 293.500h2" stroke="#000" stroke-width="1.800"/><path d="M64 301h16" stroke="#000" stroke-width="4"/><path d="M64 306.500h16" stroke="#000" stroke-width="3"/><path d="M64 311h16" stroke="#000" stroke-width="2"/><path d="M64 314.500h16" stroke="#000" stroke-width="1"/><path d="M63.500 326l7-4.500h3l1.500 1h6l-5 4.500z" fill="#f4f090" stroke="#a8a050" stroke-width=".7"/><path d="M63.500 326h12.500l5-4.500v2l-5 4.500h-12.500z" fill="#e4dc70" stroke="#a09840" stroke-width=".6"/><path d="M63.500 328h12.500l5-4.500v2l-5 4.500h-12.500z" fill="#e4dc70" stroke="#a09840" stroke-width=".6"/><path d="M63.500 330h12.500l5-4.500v2l-5 4.500h-12.500z" fill="#e4dc70" stroke="#a09840" stroke-width=".6"/><path d="M64.500 378.500h8l4.500 4.500v10.500h-12.500z" fill="#f4f4f4" stroke="#555" stroke-width="1"/><path d="M66 385h3M70 385h3" stroke="#000" stroke-width="2"/><rect x="70" y="387" width="5" height="5" fill="#ddd"/><path d="M79.500 378.500l-7.500 8" stroke="#9a6a10" stroke-width="2.400"/><path d="M79.300 378.700l-7.200 7.600" stroke="#f0b030" stroke-width="1.200"/><path d="M72.500 386l-2.500 2.500 1 1 2.500-2.500z" fill="#d0d4d8" stroke="#666" stroke-width=".5"/><path d="M70.300 388.300q-1.500 2.500-5.500 4.500q4-.2 6.500-3.500z" fill="#111"/><rect x="64" y="398" width="3" height="16" fill="url(#rg)"/><rect x="68" y="398" width="5" height="16" fill="url(#gg)"/><rect x="74" y="398" width="6" height="16" fill="url(#bg)"/><rect x="74" y="398" width="6" height="16" fill="url(#bh)"/><rect x="64" y="418" width="3" height="16" fill="url(#rg)"/><rect x="68" y="418" width="5" height="16" fill="url(#gg)"/><rect x="74" y="418" width="6" height="16" fill="url(#bg)"/><rect x="74" y="418" width="6" height="16" fill="url(#bh)"/><path d="M64.500 434l15.500-15v15z" fill="#f0f0f0"/><path d="M66 434l14-13.500v13.500z" fill="#000"/><path d="M74 427.500h6M71 430.500h9" stroke="#f0f0f0" stroke-width=".9"/><path d="M77 424.500h3" stroke="#f0f0f0" stroke-width=".9"/><path d="M64.500 478v13M79.500 478v13" stroke="#111" stroke-width="1.300"/><path d="M67 484.500h3.500M73.500 484.500h3.500" stroke="#3a7af0" stroke-width="1.300"/><path d="M65.500 484.500l3-2.500v5zM78.500 484.500l-3-2.500v5z" fill="#3a7af0"/><path d="M66 497.500h13M66 512.500h13" stroke="#111" stroke-width="1.300"/><path d="M72.500 500.500v3M72.500 506.500v3.500" stroke="#3a7af0" stroke-width="1.300"/><path d="M72.500 498.500l-2.500 3h5zM72.500 511.500l-2.500-3h5z" fill="#3a7af0"/><path d="M78.9 526.5A7.300 7.300 0 1 0 75.1 530.6" stroke="#222" stroke-width="1.200"/><circle cx="72" cy="524" r="1.600" fill="#ffd800" stroke="#3a3000" stroke-width=".7"/><text x="75.500" y="533.5" font-family="Liberation Sans,sans-serif" font-size="8" font-weight="700" fill="#111">X</text><path d="M78.9 546.5A7.300 7.300 0 1 0 75.1 550.6" stroke="#222" stroke-width="1.200"/><circle cx="72" cy="544" r="1.600" fill="#ffd800" stroke="#3a3000" stroke-width=".7"/><text x="75.500" y="553.5" font-family="Liberation Sans,sans-serif" font-size="8" font-weight="700" fill="#111">Y</text><path d="M78.9 566.5A7.300 7.300 0 1 0 75.1 570.6" stroke="#222" stroke-width="1.200"/><circle cx="72" cy="564" r="1.600" fill="#ffd800" stroke="#3a3000" stroke-width=".7"/><text x="75.500" y="573.5" font-family="Liberation Sans,sans-serif" font-size="8" font-weight="700" fill="#111">Z</text></g></svg><div class="vl" style="left:205px;top:104px;height:508px;width:2px;background:#fff"></div><div class="vl" style="left:207px;top:104px;height:508px;background:#a0a0a0"></div><div class="vl" style="left:208px;top:104px;height:508px;background:#696969"></div><div class="a" style="left:209px;top:104px;width:1120px;height:493px;background:#000"></div><svg class="i" style="left:0;top:0" width="1360" height="768" fill="none" stroke-width="1" shape-rendering="crispEdges"><defs><clipPath id="cv"><rect x="209" y="104" width="1120" height="493"/></clipPath></defs><g clip-path="url(#cv)"><path d="M413.500 104V301" stroke="#0000ff" stroke-dasharray="7.600 3.235" stroke-dashoffset="5.335"/><path d="M413.500 498.500V597" stroke="#0000ff" stroke-dasharray="7 2.800"/><path d="M209 147.500H639M209 184.500H639M638.500 110V185M616 104.500L638.500 110.500M398.500 104L407.500 147.500M429 104L420.500 147.500" stroke="#fff"/><path d="M413.500 301V498M413 301.500H473A8.500 10 0 0 1 481.500 311.500V489.500A8 8 0 0 1 473.500 497.500H413" stroke="#fff"/><path d="M413 369.500H473.500A8 8 0 0 1 481.500 377.500M481.500 480.500A8 8 0 0 1 473.500 488.500H413" stroke="#fff"/><path d="M413 380.500H467.500A8 8 0 0 1 475.500 388.500V440.500A8 8 0 0 1 467.500 448.500H413" stroke="#fff"/><path d="M414 325.500H421.500" stroke="#fff"/><path d="M426.500 325.500H481" stroke="#fff" stroke-dasharray="5.700 3.800"/><path d="M481 325.500H603" stroke="#fff"/><path d="M604 325.500H654" stroke="#fff" stroke-dasharray="6 3.500" stroke-dashoffset="3"/><path d="M473 301.500H654.500M654.500 301.820L1115.500 281.360M654.500 325.380L1115.500 304.890" stroke="#fff"/><path d="M1115 281.500H1117.500A11.650 11.650 0 0 1 1117.500 304.800H1115" stroke="#fff"/><path d="M1115.500 281V287M1115.500 290V298M1115.500 300V305" stroke="#fff"/><path d="M1115.500 288V289M1115.500 298V299" stroke="#0000ff"/><path d="M603.500 301V353.500H654.500V301" stroke="#fff"/><path d="M603 301.5h1M604 302.5h1M605 303.5h1M609 307.5h1M610 308.5h1M611 309.5h1M612 310.5h1M616 314.5h1M617 315.5h1M618 316.5h1M619 317.5h1M622 320.5h1M623 321.5h1M624 322.5h1M625 323.5h1M626 324.5h1M629 328.5h1M630 329.5h1M631 330.5h1M632 331.5h1M633 332.5h1M636 335.5h1M637 336.5h1M638 337.5h1M639 338.5h1M640 339.5h1M643 342.5h1M644 343.5h1M645 344.5h1M646 345.5h1M647 346.5h1M650 349.5h1M651 350.5h1M652 351.5h1M653 352.5h1M654 353.5h1M651 304.5h1M652 303.5h1M653 302.5h1M654 301.5h1M644 311.5h1M645 310.5h1M646 309.5h1M647 308.5h1M648 307.5h1M637 318.5h1M638 317.5h1M639 316.5h1M640 315.5h1M641 314.5h1M630 325.5h1M631 324.5h1M632 323.5h1M633 322.5h1M634 321.5h1M623 333.5h1M624 332.5h1M625 331.5h1M626 330.5h1M627 329.5h1M616 340.5h1M617 339.5h1M618 338.5h1M619 337.5h1M620 336.5h1M609 347.5h1M610 346.5h1M611 345.5h1M612 344.5h1M613 343.5h1M603 353.5h1M604 352.5h1M605 351.5h1M606 350.5h1" stroke="#00ff00"/><circle cx="628.500" cy="327.500" r="128" stroke="#ff0000" stroke-dasharray="6 3.4617" stroke-dashoffset="-3.400"/><path d="M255.500 543.500h8v8h-8zM259.500 543V489M255.500 496.500L259.500 489.500L263.500 496.500M264 547.500H318M311.500 543.500L318.500 547.500L311.500 551.500M259 547.500h1" stroke="#fff"/><path d="M255.500 475L259.500 480.500L264 475M259.500 480.500V485.500M322.500 542.500L331 553M331 542.500L322.500 553" stroke="#fff"/><path d="M821.500 468.500h6v6h-6z" stroke="#fff"/><path d="M825 473v11.500l2.600-2.500 3.300 7.700 2-.9-3.300-7.500h3.800z" fill="#fff" stroke="none"/></g></svg><div class="hl" style="top:597px;left:209px;width:1120px;background:#fdfdfd"></div><svg class="i" style="left:200px;top:596px" width="200" height="18" fill="none" stroke="#1a1a1a" stroke-width="1.100"><path d="M9 .5q2.500 1 3.500 5l1.500 6q.8 3 3.500 3h33q2.600 0 3.600-3l2.500-7.500q1-3 3-3.500z" fill="#fff"/><path d="M61.500 1q1.500 1 2.500 4.500l1.500 5.500q.8 2.800 3.500 2.800h40q2.600 0 3.600-2.800l2.200-6.500q1-3 3-3.800"/><path d="M119.500 1q1.500 1 2.500 4.500l1.500 5.500q.8 2.800 3.500 2.800h40q2.600 0 3.600-2.800l2.200-6.500q1-3 3-3.800"/></svg><span class="t" style="left:220.5px;top:599.19px;font-size:11px;letter-spacing:-0.49px;">Model</span><span class="t" style="left:272.0px;top:598.69px;font-size:11px;letter-spacing:-0.07px;">Sheet1</span><span class="t" style="left:330.5px;top:598.69px;font-size:11px;letter-spacing:-0.07px;">Sheet2</span><div class="vl" style="left:1329px;top:104px;height:636px;background:#fff"></div><div class="hl" style="top:104px;left:1329px;width:31px;background:#fff"></div><div class="hl" style="top:739px;left:1329px;width:31px;background:#a0a0a0"></div><div class="gripb" style="left:1332px;top:108px;width:26px"></div><svg class="i" style="left:1336px;top:0" width="24" height="640" fill="none" stroke="#111" stroke-width="1.300"><defs><linearGradient id="er" x1="0" y1="0" x2="1" y2="1"><stop offset="0" stop-color="#fbd4d0"/><stop offset="1" stop-color="#ee9890"/></linearGradient></defs><path d="M1 133.500h15" stroke="#555" stroke-width="1.600"/><path d="M4 133.500h4" stroke="#f0f0f0" stroke-width="1.800"/><path d="M2.500 128.500l8.500-8.500q1.200-.9 2.600-.1l1.800 1.500q.8 1 .4 2.500l-.6 2.300-8.700 8-3.500-2.500z" fill="url(#er)" stroke="#c06058" stroke-width=".9"/><path d="M2.800 128.600l3.500 2.400 8.800-8.200" stroke="#d88078" stroke-width=".7"/><rect x="9.500" y="145.500" width="6" height="6" fill="#fff" stroke-width="1.400"/><rect x=".8" y="154.500" width="6" height="6" fill="#fff" stroke="#444" stroke-width="1"/><path d="M5.500 155.500l4-4" stroke="#0a2af0" stroke-width="1.500"/><path d="M11 150l-1.200 4.200-3-3z" fill="#0a2af0" stroke="none"/><path d="M8.500 171.500V186.500H15.500L11.500 175Q10.500 171.500 8.500 171.500z" fill="#fff" stroke-width="1.300"/><path d="M6.800 172.500L.8 186.500H7" stroke-dasharray="1.200 1.300" stroke-width="1.200"/><rect x="9.500" y="197.500" width="6" height="6" fill="#fff" stroke-width="1.400"/><rect x=".8" y="206.500" width="6" height="6" stroke="#666" stroke-width="1" stroke-dasharray="1.500 1.500"/><path d="M5.500 207.500l4-4" stroke="#0a2af0" stroke-width="1.500"/><path d="M11 202l-1.200 4.200-3-3z" fill="#0a2af0" stroke="none"/><path d="M.5 223.500h15.500v9.500l-7 6" stroke-width="1.500"/><path d="M.5 226.500h12v4.500l-7 6.500" stroke="#777" stroke-width="1" stroke-dasharray="1.600 1.200"/><rect x="0.5" y="249.5" width="3" height="3" stroke-width="1.250"/><rect x="6.5" y="249.5" width="3" height="3" stroke-width="1.250"/><rect x="12.5" y="249.5" width="3" height="3" stroke-width="1.250"/><rect x="0.5" y="255.5" width="3" height="3" stroke-width="1.250"/><rect x="6.5" y="255.5" width="3" height="3" stroke-width="1.250"/><rect x="12.5" y="255.5" width="3" height="3" stroke-width="1.250"/><rect x="0.5" y="261.5" width="3" height="3" fill="#999" stroke="#777" stroke-width="1"/><rect x="6.5" y="261.5" width="3" height="3" stroke-width="1.250"/><rect x="12.5" y="261.5" width="3" height="3" stroke-width="1.250"/><rect x=".8" y="281.500" width="7" height="7.500" stroke="#555" stroke-width="1" stroke-dasharray="1.700 1.300"/><path d="M11.500 280.500l4.300 4.300-4.300 4.300-4.300-4.300z" fill="#fff" stroke-width="1.400"/><path d="M4.500 280q1.500-3.500 5-3" stroke="#0a2af0" stroke-width="1.500"/><path d="M10.800 275.200l.2 4.200-3.500-1.500z" fill="#0a2af0" stroke="none"/><path d="M.5 308v-6.500h15v15h-7" stroke-width="1.500"/><rect x=".8" y="309.500" width="7" height="7" stroke="#555" stroke-width="1" stroke-dasharray="1.700 1.300"/><path d="M8 309l5-5" stroke="#0a2af0" stroke-width="1.400"/><path d="M14.500 302.500l-1.200 4.200-3-3z" fill="#0a2af0" stroke="none"/><path d="M.5 327.500h6v7.500h9v7.500h-15z" fill="#c8c8c0" stroke="#999" stroke-width=".8"/><path d="M6.500 335h9v7.500h-9" fill="#fff" stroke-width="1.500"/><path d="M8 339h4" stroke="#0a2af0" stroke-width="1.500"/><path d="M14 339l-3 2.300v-4.600z" fill="#0a2af0" stroke="none"/><path d="M1 355h6M14 362.500v6" stroke-width="2"/><path d="M7.500 355l6.500 7" stroke="#2a7af0" stroke-width="2"/><path d="M0 381h6M14 389v6" stroke-width="2"/><path d="M6 381q8 0 8 8.500" stroke="#2a7af0" stroke-width="2"/><path d="M4.500 387.500h5M7 385v5" stroke-width="1.200"/><path d="M13.500 407.500h-8q-4.500.5-4.500 6.500t4.500 6.500h8v-9" stroke-width="1.300"/><circle cx="13.700" cy="410.500" r="1.500" fill="#2a7af0" stroke="none"/><path d="M13.500 433.500h-8q-4.500.5-4.500 6.500t4.500 6.500h8" stroke-width="1.300"/><circle cx="13.700" cy="437.500" r="1.500" fill="#2a7af0" stroke="none"/><circle cx="13.700" cy="442.500" r="1.500" fill="#2a7af0" stroke="none"/><path d="M.5 465h5M10.500 465h5" stroke="#1a6af0" stroke-width="2"/><path d="M7.200 465l-3.200-2.800v5.600zM8.800 465l3.200-2.800v5.600z" fill="#1a6af0" stroke="none"/><rect x="6.500" y="463.500" width="3" height="3" fill="#fff" stroke="none" opacity=".6"/><path d="M.5 485h15.500" stroke-width="2.200"/><path d="M8.500 487v8" stroke="#1a6af0" stroke-width="2" stroke-dasharray="1.500 1"/><path d="M8.500 495.500v4" stroke-width="2"/><path d="M1.500 515.500l9 8.500" stroke="#222" stroke-width="1.400"/><path d="M1 519.500l10.500-8.500" stroke="#555" stroke-width="2.200"/><path d="M1.500 519.200l9.500-7.800" stroke="#f4f4f4" stroke-width=".9"/><path d="M2.500 509l3.500 5.500" stroke="#2a7af0" stroke-width="1.800"/><circle cx="11" cy="511.500" r="1.900" stroke="#8a7020" stroke-width="1.400"/><circle cx="13.200" cy="517" r="1.900" stroke="#8a7020" stroke-width="1.400"/><defs><pattern id="hq" x="0" y="0" width="2.600" height="2.600" patternUnits="userSpaceOnUse" patternTransform="rotate(-45)"><rect x="0" y="0" width="2.600" height="1" fill="#555" stroke="none"/></pattern></defs><rect x=".5" y="537" width="15" height="13.500" fill="#e4e4e4" stroke="none"/><rect x=".5" y="537" width="15" height="13.500" fill="url(#hq)" stroke="#b0b0b0" stroke-width=".7"/><path d="M2.500 542q2-5 6-6.500q3.500-1 7.500-.5v4.500q-2.500.3-4 2.200q-1.500-1.800-3-.8l-2 2.300z" fill="#f0c8a0" stroke="#b07840" stroke-width=".8"/><defs><linearGradient id="yq" x1="0" y1="0" x2="0" y2="1"><stop offset="0" stop-color="#fffbd8"/><stop offset="1" stop-color="#fcdc50"/></linearGradient><linearGradient id="bq" x1="0" y1="0" x2="0" y2="1"><stop offset="0" stop-color="#f4fafc"/><stop offset="1" stop-color="#b8dcf0"/></linearGradient></defs><rect x="6" y="566.500" width="9.500" height="9.500" fill="url(#bq)" stroke="#9ab0c0" stroke-width=".9"/><rect x=".6" y="561.500" width="9.500" height="9.500" fill="url(#yq)" stroke="#a8a080" stroke-width=".9"/><path d="M1.500 593q1-5.500 6.500-5.500t6.500 5M3 594q1.500 5 5 7.500" stroke-width="1.200"/><path d="M3.500 597.500q2-4.500 5.500-5.500t7 0v4q-2.500.2-4 2q-1.500-1.600-3-.7l-2 2.200z" fill="#f0c8a0" stroke="#b07840" stroke-width=".8"/><circle cx="2" cy="593" r="1.700" fill="#ffd800" stroke="#1a1a00" stroke-width=".9"/><circle cx="8" cy="601" r="1.700" fill="#ffd800" stroke="#1a1a00" stroke-width=".9"/><defs><radialGradient id="bm" cx=".4" cy=".3" r=".7"><stop offset="0" stop-color="#9a9a9a"/><stop offset=".5" stop-color="#555"/><stop offset="1" stop-color="#222"/></radialGradient></defs><circle cx="7.500" cy="623" r="5.500" fill="url(#bm)" stroke="none"/><path d="M8 618q1-2.500 3.200-3.600" stroke="#222" stroke-width="1.300"/><circle cx="11.800" cy="614.200" r="2" fill="#ff2010" stroke="#f8c020" stroke-width=".9"/></svg><div class="hl" style="top:612px;left:31px;width:1298px;height:2px;background:#fff"></div><div class="hl" style="top:614px;left:31px;width:1298px;background:#a0a0a0"></div><div class="hl" style="top:615px;left:31px;width:1298px;background:#696969"></div><div class="hl" style="top:616px;left:31px;width:1298px;height:2px;background:#fff"></div><div class="vl" style="left:31px;top:616px;height:124px;background:#fff"></div><div class="a" style="left:31px;top:618px;width:1298px;height:17px;box-sizing:border-box;border:1px solid #a0a0a0"></div><span class="t" style="left:34.5px;top:620.69px;font-size:11px;letter-spacing:-0.22px;">Okno poleceń</span><svg class="i" style="left:1300px;top:620px" width="28" height="12" fill="none" stroke="#000"><path d="M4.500 4.500v-2h5v4h-2.500" stroke-width="1.400"/><rect x="2.500" y="5" width="5" height="4.500" stroke-width="1.400"/><path d="M2 4.700h6M4 2.200h6" stroke-width="1.600"/><path d="M17.500 3.500l7 7M24.500 3.500l-7 7" stroke-width="1.700"/></svg><div class="hl" style="top:635px;left:31px;width:1298px;height:2px;background:#fbfbfb"></div><div class="a" style="left:31px;top:637px;width:1298px;height:87px;box-sizing:border-box;border:1px solid #828790;background:#fff;overflow:hidden"><div class="a" style="left:4px;top:-14.620px;font-size:13.330px;letter-spacing:-.175px;line-height:16px;white-space:pre"><b>Określ punkt środkowy»</b>
Domyślny: <b style="color:#ff9a2e;margin-left:1.200px">125</b>
Opcje: <span style="color:#1e7fd0"><u>Ś</u>rednica</span> lub
<b style="letter-spacing:-.05px">Określ promień»</b> 125
:
Automatycznie zapisane w C:\Users\robert\AppData\Local\Temp\DraftSight_autosave\profil kadłuba 3,1 powiekszony_1932.ds$</div></div><div class="a" style="left:1312px;top:638px;width:16px;height:85px;background:linear-gradient(to right,#e8e8e8,#f4f4f4 40%,#f6f6f6)"></div><div class="a" style="left:1312px;top:698px;width:16px;height:8px;box-sizing:border-box;border:1px solid #979797;border-radius:2px;background:linear-gradient(to bottom,#f4f4f4,#d4d4d8)"></div><svg class="i" style="left:1312px;top:638px" width="16" height="85"><path d="M4.500 10.500l3.500-3.500 3.500 3.500z" fill="#505050"/><path d="M4.500 74.500l3.500 3.500 3.500-3.500z" fill="#505050"/></svg><div class="a" style="left:32px;top:724px;width:1297px;height:16px;background:#fff"></div><div class="t" style="left:35.300px;top:725.700px;font-size:13.330px">:</div><div class="sb" style="left:453px;top:745px;width:77px"></div><span class="t" style="left:457.5px;top:749.19px;font-size:11px;letter-spacing:0.41px;">Przyciąganie</span><div class="sb" style="left:538px;top:745px;width:42px"></div><span class="t" style="left:542.5px;top:749.19px;font-size:11px;letter-spacing:0.28px;">Siatka</span><div class="sb" style="left:588px;top:745px;width:35px"></div><span class="t" style="left:592.5px;top:749.19px;font-size:11px;letter-spacing:1.03px;">Orto</span><div class="sb on" style="left:633px;top:745px;width:70px"></div><span class="t" style="left:639.5px;top:750.19px;font-size:11px;letter-spacing:0.52px;">Biegunowy</span><div class="sb on" style="left:711px;top:745px;width:144px"></div><span class="t" style="left:717.5px;top:750.19px;font-size:11px;letter-spacing:0.40px;">pRZyciąganie elementów</span><div class="sb on" style="left:863px;top:745px;width:45px"></div><span class="t" style="left:869.0px;top:750.19px;font-size:11px;letter-spacing:-0.09px;">ETrack</span><div class="vl" style="left:446px;top:742px;height:23px;background:#dcdcdc;box-shadow:1px 0 0 #fff"></div><div class="vl" style="left:626px;top:742px;height:23px;background:#dcdcdc;box-shadow:1px 0 0 #fff"></div><div class="vl" style="left:911px;top:742px;height:23px;background:#dcdcdc;box-shadow:1px 0 0 #fff"></div><span class="t" style="left:916.5px;top:749.19px;font-size:11px;letter-spacing:-0.02px;">(1037.026,-125.097,0)</span><div class="hl" style="top:765px;background:#f8f8f8"></div><div class="hl" style="top:766px;background:#4d5d70"></div><div class="hl" style="top:767px;background:#a8c4e2"></div><div class="a" style="left:123px;top:766px;width:41px;height:1px;background:#10151c"></div><div class="a" style="left:122px;top:767px;width:43px;height:1px;box-sizing:border-box;border-left:1px solid #10151c;border-right:1px solid #10151c;background:#dfe8f2"></div><div class="a" style="left:215px;top:766px;width:41px;height:1px;background:#10151c"></div><div class="a" style="left:214px;top:767px;width:43px;height:1px;box-sizing:border-box;border-left:1px solid #10151c;border-right:1px solid #10151c;background:#dfe8f2"></div><div class="a" style="left:307px;top:766px;width:41px;height:1px;background:#10151c"></div><div class="a" style="left:306px;top:767px;width:43px;height:1px;box-sizing:border-box;border-left:1px solid #10151c;border-right:1px solid #10151c;background:#dfe8f2"></div><div class="a" style="left:399px;top:766px;width:41px;height:1px;background:#10151c"></div><div class="a" style="left:398px;top:767px;width:43px;height:1px;box-sizing:border-box;border-left:1px solid #10151c;border-right:1px solid #10151c;background:#dfe8f2"></div><div class="a" style="left:445px;top:766px;width:41px;height:1px;background:#10151c"></div><div class="a" style="left:444px;top:767px;width:43px;height:1px;box-sizing:border-box;border-left:1px solid #10151c;border-right:1px solid #10151c;background:#dfe8f2"></div><div class="a" style="left:491px;top:766px;width:41px;height:1px;background:#10151c"></div><div class="a" style="left:490px;top:767px;width:43px;height:1px;box-sizing:border-box;border-left:1px solid #10151c;border-right:1px solid #10151c;background:#dfe8f2"></div>
</body></html>
